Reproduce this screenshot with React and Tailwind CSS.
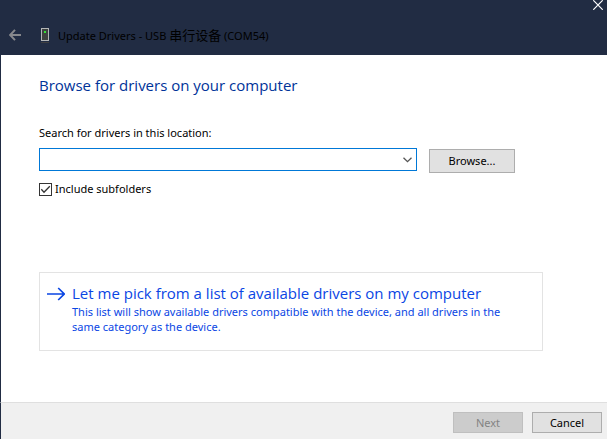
import React, { useState } from 'react';

function TitleBar() {
  return (
    <header className="flex h-[55px] flex-col bg-[#212c43]">
      <div className="flex h-[10px] justify-end pr-[4px]">
        <button type="button" aria-label="Close" className="h-[10px] w-[10px]">
          <svg viewBox="0 0 10 10" className="block h-[10px] w-[10px]" fill="none" stroke="#ffffff" strokeWidth="1.2">
            <path d="M0.3 0.3 9.7 9.7M9.7 0.3 0.3 9.7" />
          </svg>
        </button>
      </div>
      <div className="flex h-[45px] items-center pt-[5px] pl-[9px]">
        <button type="button" aria-label="Back" className="h-[12px] w-[12px]">
          <svg viewBox="0 0 12 12" className="block h-[12px] w-[12px]" fill="none" stroke="#87888c" strokeWidth="2">
            <path d="M12 6H1.2M6 0.9 1.1 6 6 11.1" />
          </svg>
        </button>
        <svg viewBox="0 0 8 15" className="ml-[20px] block h-[15px] w-[8px]" shapeRendering="crispEdges" aria-hidden="true">
          <rect x="0" y="0" width="8" height="13" fill="#b4b6b6" />
          <rect x="1" y="1" width="6" height="11" fill="#3e4240" />
          <rect x="3" y="3" width="2" height="2" fill="#35e435" />
          <rect x="0" y="14" width="8" height="1" fill="#3e3e40" />
        </svg>
        <h1 className="ml-[9px] text-[11px] leading-[16px] text-black">
          Update Drivers - USB <span className="text-[13px]">串行设备</span> (COM54)
        </h1>
      </div>
    </header>
  );
}

function LocationPicker() {
  const [path, setPath] = useState('');
  return (
    <div className="mr-[28px] flex items-start gap-[12px]">
      <div className="flex h-[23px] min-w-0 flex-1 border border-[#0078d7] bg-white">
        <input
          id="location"
          type="text"
          value={path}
          onChange={(e) => setPath(e.target.value)}
          className="min-w-0 flex-1 px-[3px] outline-none"
        />
        <button type="button" aria-label="Show recent locations" className="flex w-[17px] items-center justify-center">
          <svg viewBox="0 0 9 6" className="block h-[6px] w-[9px]" fill="none" stroke="#555555" strokeWidth="1.3">
            <path d="M0.5 0.7 4.5 4.7 8.5 0.7" />
          </svg>
        </button>
      </div>
      <button type="button" className="mt-[1px] h-[24px] w-[86px] border border-[#adadad] bg-[#e1e1e1]">
        Browse...
      </button>
    </div>
  );
}

export default function App() {
  const [include, setInclude] = useState(true);
  return (
    <div className="flex min-h-screen flex-col bg-white font-['Noto_Sans','Noto_Sans_CJK_SC',sans-serif] text-[11px] leading-[16px] text-black">
      <TitleBar />
      <main className="flex-1 border-l border-[#212c43] pt-[19px] pr-[64px] pl-[38px]">
        <h2 className="font-['Open_Sans',sans-serif] text-[15px] leading-[22px] text-[#003399]">
          Browse for drivers on your computer
        </h2>
        <label htmlFor="location" className="mt-[29px] mb-[7px] block">
          Search for drivers in this location:
        </label>
        <LocationPicker />
        <label className="mt-[8px] flex w-fit items-center gap-[3px]">
          <span className="grid h-[13px] w-[13px]">
            <input
              type="checkbox"
              checked={include}
              onChange={(e) => setInclude(e.target.checked)}
              className="peer col-start-1 row-start-1 h-[13px] w-[13px] appearance-none border border-[#333333] bg-white"
            />
            <svg
              viewBox="0 0 13 13"
              className="pointer-events-none invisible col-start-1 row-start-1 block h-[13px] w-[13px] peer-checked:visible"
              fill="none"
              stroke="#333333"
              strokeWidth="1.3"
            >
              <path d="M2.3 6.3 5 9.2 10.8 3.2" />
            </svg>
          </span>
          Include subfolders
        </label>
        <button type="button" className="mt-[75px] flex h-[79px] w-full items-start border border-[#e3e3e3] pt-[9px] pr-[20px] pl-[7px] text-left text-[#0a46e4]">
          <svg viewBox="0 0 18 14" className="mt-[5px] block h-[14px] w-[18px] shrink-0" fill="none" stroke="#0a46e4" strokeWidth="1.7">
            <path d="M0 7H17M11.2 1 17.2 7 11.2 13" />
          </svg>
          <span className="ml-[7px] block">
            <span className="block font-['Open_Sans',sans-serif] text-[15px] leading-[22px]">
              Let me pick from a list of available drivers on my computer
            </span>
            <span className="block leading-[15px]">
              This list will show available drivers compatible with the device, and all drivers in the same category as the device.
            </span>
          </span>
        </button>
      </main>
      <footer className="flex h-[37px] items-start justify-end gap-[9px] border-t border-l border-t-[#dfdfdf] border-l-[#212c43] bg-[#f0f0f0] pt-[9px] pr-[5px]">
        <button type="button" disabled className="h-[21px] w-[70px] border border-[#bfbfbf] bg-[#cccccc] text-[#838383]">
          Next
        </button>
        <button type="button" className="h-[21px] w-[70px] border border-[#adadad] bg-[#e1e1e1]">
          Cancel
        </button>
      </footer>
    </div>
  );
}
